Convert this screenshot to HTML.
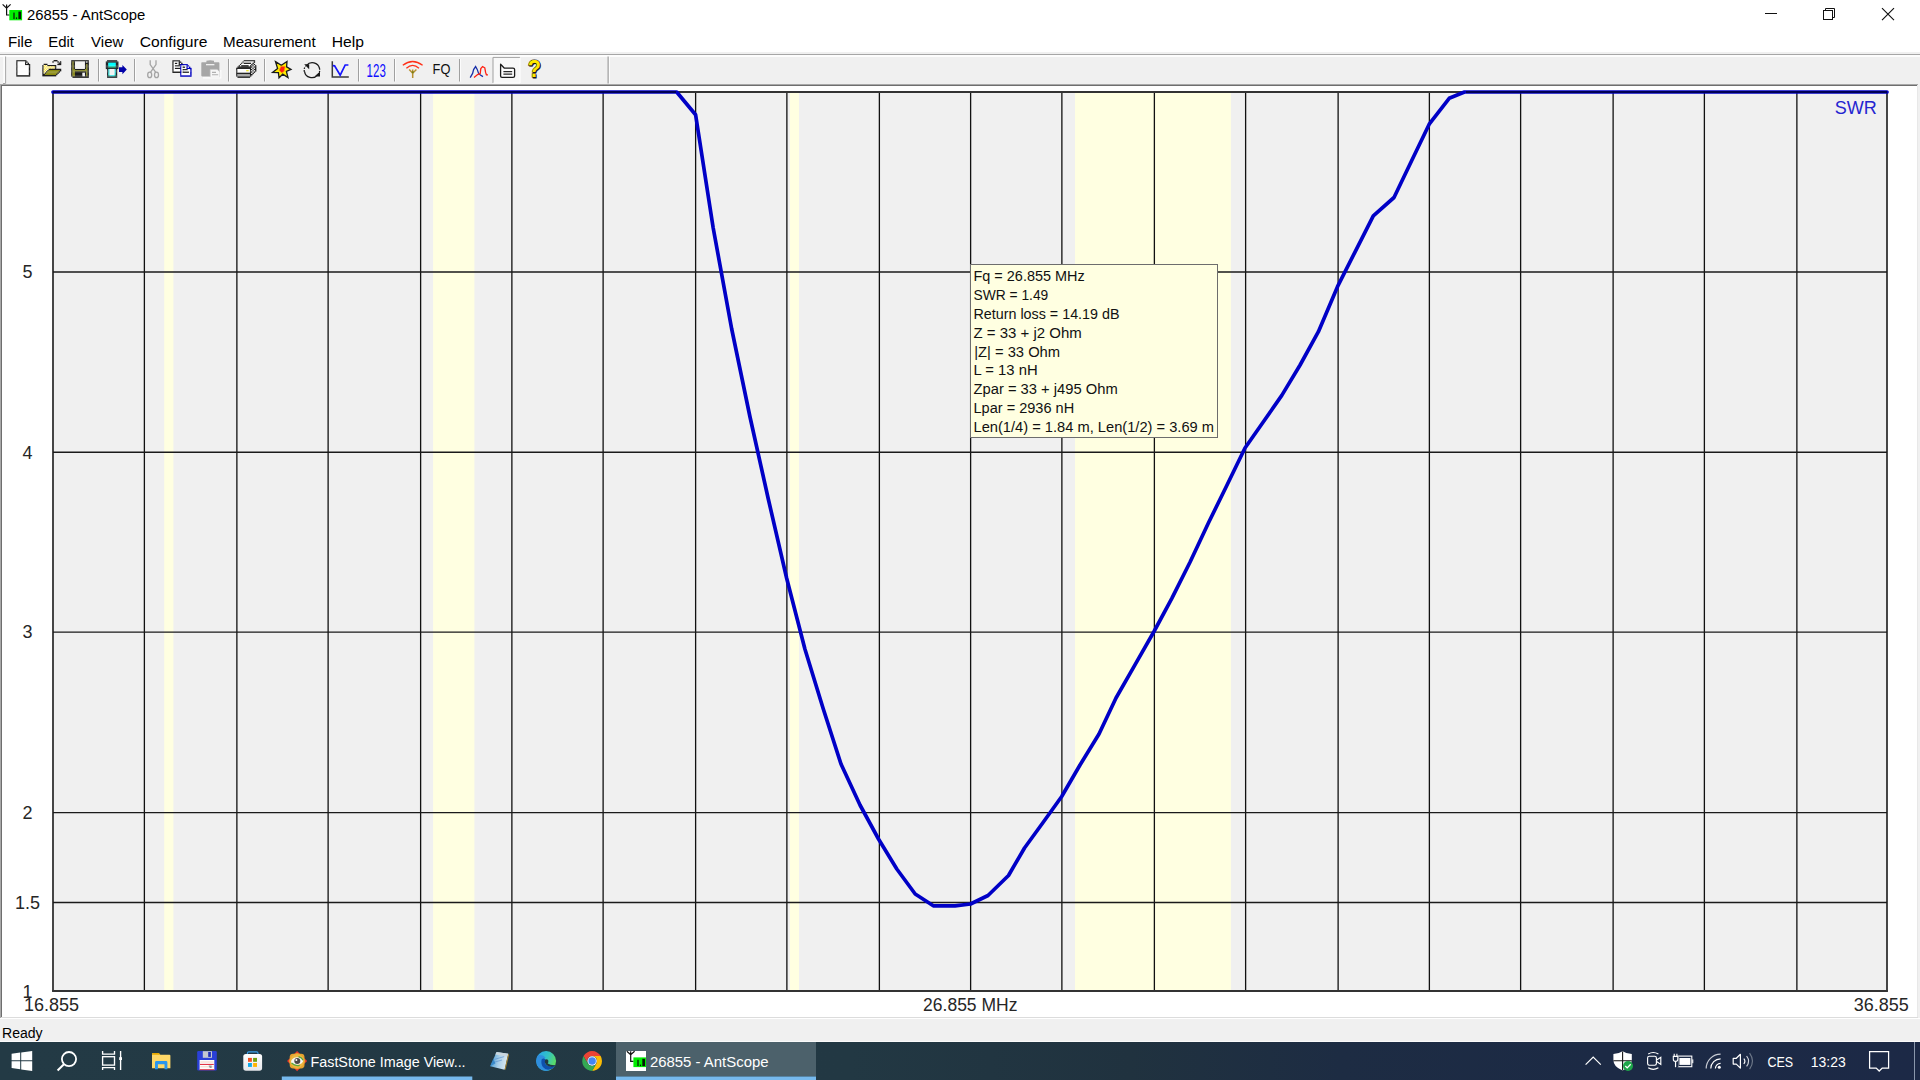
<!DOCTYPE html>
<html><head><meta charset="utf-8"><title>26855 - AntScope</title>
<style>
html,body{margin:0;padding:0;}
body{width:1920px;height:1080px;position:relative;overflow:hidden;background:#fff;font-family:"Liberation Sans",sans-serif;color:#000;}
.a{position:absolute;}
.t{position:absolute;white-space:pre;transform-origin:0 0;line-height:1;}
</style></head><body>
<div class="a" style="left:0;top:0;width:1920px;height:52px;background:#fff"></div>
<div class="a" style="left:0;top:52px;width:1920px;height:32px;background:#f0f0f0"></div>
<div class="a" style="left:0;top:54px;width:1920px;height:1px;background:#a6a6a6"></div>
<div class="a" style="left:0;top:55px;width:1920px;height:2px;background:#fdfdfd"></div>
<div class="a" style="left:0;top:84px;width:1918px;height:934px;background:#fff"></div>
<div class="a" style="left:0;top:84px;width:1918px;height:1px;background:#a8a8a8"></div>
<div class="a" style="left:0;top:85px;width:1918px;height:1px;background:#6e6e6e"></div>
<div class="a" style="left:0;top:84px;width:1px;height:934px;background:#a8a8a8"></div>
<div class="a" style="left:1px;top:85px;width:1px;height:932px;background:#6e6e6e"></div>
<div class="a" style="left:1918px;top:84px;width:2px;height:935px;background:#f0f0f0"></div>
<div class="a" style="left:1917px;top:85px;width:1px;height:933px;background:#e8e8e8"></div>
<div class="a" style="left:1px;top:1017px;width:1917px;height:1px;background:#dcdcdc"></div>
<div class="a" style="left:0;top:1018px;width:1920px;height:1px;background:#fff"></div>
<div class="a" style="left:0;top:1019px;width:1920px;height:23px;background:#f0f0f0"></div>
<div class="a" style="left:0;top:1041px;width:1920px;height:1px;background:#fafafa"></div>
<svg width="1920" height="1080" viewBox="0 0 1920 1080" style="position:absolute;left:0;top:0">
<rect x="53.0" y="92.0" width="1834.0" height="899.0" fill="#f0f0f0"/>
<rect x="164.2" y="92.0" width="9.2" height="899.0" fill="#ffffe1"/>
<rect x="433.1" y="92.0" width="41.3" height="899.0" fill="#ffffe1"/>
<rect x="789.8" y="92.0" width="9.2" height="899.0" fill="#ffffe1"/>
<rect x="1075.0" y="92.0" width="155.9" height="899.0" fill="#ffffe1"/>
<path d="M144.38 91.4V991.6M236.88 91.4V991.6M328.12 91.4V991.6M420.62 91.4V991.6M511.88 91.4V991.6M603.12 91.4V991.6M695.62 91.4V991.6M786.88 91.4V991.6M879.38 91.4V991.6M970.62 91.4V991.6M1061.88 91.4V991.6M1154.38 91.4V991.6M1245.62 91.4V991.6M1338.12 91.4V991.6M1429.38 91.4V991.6M1520.62 91.4V991.6M1613.12 91.4V991.6M1704.38 91.4V991.6M1796.88 91.4V991.6" stroke="#111" stroke-width="1.3" fill="none"/>
<path d="M53.00 91.4V991.6M1887.00 91.4V991.6" stroke="#333" stroke-width="1.8" fill="none"/>
<path d="M53.0 272.07H1887.0M53.0 452.32H1887.0M53.0 632.08H1887.0M53.0 812.58H1887.0M53.0 902.45H1887.0" stroke="#1a1a1a" stroke-width="1.4" fill="none"/>
<path d="M52.1 92H1887.9M52.1 991H1887.9" stroke="#333" stroke-width="1.8" fill="none"/>
<path d="M53.0 92.0 L676.7 92.0 L695.6 114.8 L713.2 228.0 L731.6 328.5 L749.9 416.5 L768.3 499.0 L786.6 578.0 L804.9 649.0 L823.3 709.0 L841.0 764.0 L860.0 805.0 L878.5 839.0 L896.8 869.0 L915.2 894.0 L933.3 905.8 L955.0 905.8 L970.5 904.0 L988.0 895.5 L1008.5 875.5 L1024.5 848.0 L1043.4 822.0 L1061.7 796.5 L1080.0 765.0 L1099.0 734.0 L1116.0 698.0 L1135.1 664.7 L1154.0 631.5 L1171.7 598.6 L1190.1 562.0 L1208.4 523.0 L1226.8 485.5 L1245.0 448.0 L1263.4 421.7 L1281.8 395.4 L1300.1 365.0 L1318.4 331.7 L1337.5 286.7 L1355.1 251.8 L1373.3 215.8 L1394.0 197.5 L1411.5 161.0 L1429.2 124.2 L1449.2 98.3 L1464.5 92.0 L1887.0 92.0" stroke="#0000c6" stroke-width="3.7" fill="none" stroke-linejoin="round" stroke-linecap="round"/>
<path d="M53 92H676M1466 92H1887" stroke="#000018" stroke-width="1.3" opacity="0.85" fill="none"/>
</svg>
<div class="a" style="left:970px;top:264px;width:246px;height:172px;background:#ffffe1;border:1px solid #6d6d6d"></div>
<svg width="1920" height="1080" viewBox="0 0 1920 1080" style="position:absolute;left:0;top:0" font-family="Liberation Sans, sans-serif">
<text x="27.00" y="19.60" font-size="14.7" fill="#000" textLength="118.20" lengthAdjust="spacingAndGlyphs" xml:space="preserve">26855 - AntScope</text>
<text x="8.00" y="46.60" font-size="14.7" fill="#000" textLength="24.40" lengthAdjust="spacingAndGlyphs" xml:space="preserve">File</text>
<text x="48.30" y="46.60" font-size="14.7" fill="#000" textLength="25.70" lengthAdjust="spacingAndGlyphs" xml:space="preserve">Edit</text>
<text x="91.10" y="46.60" font-size="14.7" fill="#000" textLength="32.30" lengthAdjust="spacingAndGlyphs" xml:space="preserve">View</text>
<text x="139.70" y="46.60" font-size="14.7" fill="#000" textLength="67.70" lengthAdjust="spacingAndGlyphs" xml:space="preserve">Configure</text>
<text x="223.00" y="46.60" font-size="14.7" fill="#000" textLength="92.70" lengthAdjust="spacingAndGlyphs" xml:space="preserve">Measurement</text>
<text x="331.70" y="46.60" font-size="14.7" fill="#000" textLength="32.30" lengthAdjust="spacingAndGlyphs" xml:space="preserve">Help</text>
<text x="2.00" y="1037.80" font-size="14.7" fill="#000" textLength="40.60" lengthAdjust="spacingAndGlyphs" xml:space="preserve">Ready</text>
<text x="27.40" y="278.30" font-size="18" fill="#262626" text-anchor="middle" xml:space="preserve">5</text>
<text x="27.40" y="458.50" font-size="18" fill="#262626" text-anchor="middle" xml:space="preserve">4</text>
<text x="27.40" y="638.30" font-size="18" fill="#262626" text-anchor="middle" xml:space="preserve">3</text>
<text x="27.40" y="818.60" font-size="18" fill="#262626" text-anchor="middle" xml:space="preserve">2</text>
<text x="27.40" y="908.60" font-size="18" fill="#262626" text-anchor="middle" xml:space="preserve">1.5</text>
<text x="27.40" y="997.60" font-size="18" fill="#262626" text-anchor="middle" xml:space="preserve">1</text>
<text x="24.00" y="1010.80" font-size="18" fill="#262626" xml:space="preserve">16.855</text>
<text x="923.10" y="1010.80" font-size="18" fill="#262626" textLength="94.30" lengthAdjust="spacingAndGlyphs" xml:space="preserve">26.855 MHz</text>
<text x="1908.80" y="1010.80" font-size="18" fill="#262626" text-anchor="end" xml:space="preserve">36.855</text>
<text x="1834.80" y="114.30" font-size="18" fill="#2424d0" xml:space="preserve">SWR</text>
<text x="973.50" y="281.40" font-size="14.7" fill="#111" textLength="111.20" lengthAdjust="spacingAndGlyphs" xml:space="preserve">Fq = 26.855 MHz</text>
<text x="973.50" y="300.18" font-size="14.7" fill="#111" textLength="74.80" lengthAdjust="spacingAndGlyphs" xml:space="preserve">SWR = 1.49</text>
<text x="973.50" y="318.96" font-size="14.7" fill="#111" textLength="146.00" lengthAdjust="spacingAndGlyphs" xml:space="preserve">Return loss = 14.19 dB</text>
<text x="973.50" y="337.74" font-size="14.7" fill="#111" textLength="108.20" lengthAdjust="spacingAndGlyphs" xml:space="preserve">Z = 33 + j2 Ohm</text>
<text x="974.20" y="356.52" font-size="14.7" fill="#111" textLength="85.90" lengthAdjust="spacingAndGlyphs" xml:space="preserve">|Z| = 33 Ohm</text>
<text x="973.50" y="375.30" font-size="14.7" fill="#111" textLength="64.10" lengthAdjust="spacingAndGlyphs" xml:space="preserve">L = 13 nH</text>
<text x="973.50" y="394.08" font-size="14.7" fill="#111" textLength="144.20" lengthAdjust="spacingAndGlyphs" xml:space="preserve">Zpar = 33 + j495 Ohm</text>
<text x="973.50" y="412.86" font-size="14.7" fill="#111" textLength="100.70" lengthAdjust="spacingAndGlyphs" xml:space="preserve">Lpar = 2936 nH</text>
<text x="973.50" y="431.64" font-size="14.7" fill="#111" textLength="240.50" lengthAdjust="spacingAndGlyphs" xml:space="preserve">Len(1/4) = 1.84 m, Len(1/2) = 3.69 m</text>
</svg>
<svg width="1920" height="90" viewBox="0 0 1920 90" style="position:absolute;left:0;top:0"><path d="M2.6 4.4L6.6 8.2L10.6 4.4M6.6 4.4V15H9.6" fill="none" stroke="#111" stroke-width="1.2"/><rect x="9.3" y="10" width="12.8" height="10.3" fill="#00f000"/><rect x="13.4" y="12.6" width="1.2" height="6.4" fill="#061806"/><rect x="15.9" y="17.4" width="1.2" height="1.6" fill="#061806"/><rect x="18.4" y="11.6" width="2.7" height="7.4" fill="#061806"/><path d="M1765 13.5H1777" stroke="#111" stroke-width="1"/><path d="M1825.5 10.5V8.5H1834.5V17.5H1832.5" fill="none" stroke="#111" stroke-width="1"/><rect x="1823.5" y="10.5" width="9" height="9" fill="none" stroke="#111" stroke-width="1"/><path d="M1882 8.2L1894 20.2M1894 8.2L1882 20.2" stroke="#111" stroke-width="1.15"/><rect x="16.30" y="60.20" width="10.15" height="1.40" fill="#1c1c1c"/><rect x="16.30" y="61.45" width="1.40" height="1.40" fill="#1c1c1c"/><rect x="17.55" y="61.45" width="7.65" height="1.40" fill="#fff"/><rect x="25.05" y="61.45" width="2.65" height="1.40" fill="#1c1c1c"/><rect x="16.30" y="62.70" width="1.40" height="1.40" fill="#1c1c1c"/><rect x="17.55" y="62.70" width="7.65" height="1.40" fill="#fff"/><rect x="25.05" y="62.70" width="1.40" height="1.40" fill="#1c1c1c"/><rect x="26.30" y="62.70" width="1.40" height="1.40" fill="#fff"/><rect x="27.55" y="62.70" width="1.40" height="1.40" fill="#1c1c1c"/><rect x="16.30" y="63.95" width="1.40" height="1.40" fill="#1c1c1c"/><rect x="17.55" y="63.95" width="7.65" height="1.40" fill="#fff"/><rect x="25.05" y="63.95" width="5.15" height="1.40" fill="#1c1c1c"/><rect x="16.30" y="65.20" width="1.40" height="1.40" fill="#1c1c1c"/><rect x="17.55" y="65.20" width="11.40" height="1.40" fill="#fff"/><rect x="28.80" y="65.20" width="1.40" height="1.40" fill="#1c1c1c"/><rect x="16.30" y="66.45" width="1.40" height="1.40" fill="#1c1c1c"/><rect x="17.55" y="66.45" width="11.40" height="1.40" fill="#fff"/><rect x="28.80" y="66.45" width="1.40" height="1.40" fill="#1c1c1c"/><rect x="16.30" y="67.70" width="1.40" height="1.40" fill="#1c1c1c"/><rect x="17.55" y="67.70" width="11.40" height="1.40" fill="#fff"/><rect x="28.80" y="67.70" width="1.40" height="1.40" fill="#1c1c1c"/><rect x="16.30" y="68.95" width="1.40" height="1.40" fill="#1c1c1c"/><rect x="17.55" y="68.95" width="11.40" height="1.40" fill="#fff"/><rect x="28.80" y="68.95" width="1.40" height="1.40" fill="#1c1c1c"/><rect x="16.30" y="70.20" width="1.40" height="1.40" fill="#1c1c1c"/><rect x="17.55" y="70.20" width="11.40" height="1.40" fill="#fff"/><rect x="28.80" y="70.20" width="1.40" height="1.40" fill="#1c1c1c"/><rect x="16.30" y="71.45" width="1.40" height="1.40" fill="#1c1c1c"/><rect x="17.55" y="71.45" width="11.40" height="1.40" fill="#fff"/><rect x="28.80" y="71.45" width="1.40" height="1.40" fill="#1c1c1c"/><rect x="16.30" y="72.70" width="1.40" height="1.40" fill="#1c1c1c"/><rect x="17.55" y="72.70" width="11.40" height="1.40" fill="#fff"/><rect x="28.80" y="72.70" width="1.40" height="1.40" fill="#1c1c1c"/><rect x="16.30" y="73.95" width="1.40" height="1.40" fill="#1c1c1c"/><rect x="17.55" y="73.95" width="11.40" height="1.40" fill="#fff"/><rect x="28.80" y="73.95" width="1.40" height="1.40" fill="#1c1c1c"/><rect x="16.30" y="75.20" width="13.90" height="1.40" fill="#1c1c1c"/><rect x="53.60" y="60.00" width="3.90" height="1.40" fill="#1c1c1c"/><rect x="52.35" y="61.25" width="1.40" height="1.40" fill="#1c1c1c"/><rect x="57.35" y="61.25" width="1.40" height="1.40" fill="#1c1c1c"/><rect x="59.85" y="61.25" width="1.40" height="1.40" fill="#1c1c1c"/><rect x="58.60" y="62.50" width="2.65" height="1.40" fill="#1c1c1c"/><rect x="43.60" y="63.75" width="3.90" height="1.40" fill="#1c1c1c"/><rect x="57.35" y="63.75" width="3.90" height="1.40" fill="#1c1c1c"/><rect x="42.35" y="65.00" width="1.40" height="1.40" fill="#1c1c1c"/><rect x="43.60" y="65.00" width="1.40" height="1.40" fill="#fff8c8"/><rect x="44.85" y="65.00" width="1.40" height="1.40" fill="#ffe640"/><rect x="46.10" y="65.00" width="1.40" height="1.40" fill="#fff8c8"/><rect x="47.35" y="65.00" width="8.90" height="1.40" fill="#1c1c1c"/><rect x="42.35" y="66.25" width="1.40" height="1.40" fill="#1c1c1c"/><rect x="43.60" y="66.25" width="1.40" height="1.40" fill="#ffe640"/><rect x="44.85" y="66.25" width="1.40" height="1.40" fill="#fff8c8"/><rect x="46.10" y="66.25" width="1.40" height="1.40" fill="#ffe640"/><rect x="47.35" y="66.25" width="1.40" height="1.40" fill="#fff8c8"/><rect x="48.60" y="66.25" width="1.40" height="1.40" fill="#ffe640"/><rect x="49.85" y="66.25" width="1.40" height="1.40" fill="#fff8c8"/><rect x="51.10" y="66.25" width="1.40" height="1.40" fill="#ffe640"/><rect x="52.35" y="66.25" width="1.40" height="1.40" fill="#fff8c8"/><rect x="53.60" y="66.25" width="1.40" height="1.40" fill="#ffe640"/><rect x="54.85" y="66.25" width="1.40" height="1.40" fill="#1c1c1c"/><rect x="42.35" y="67.50" width="1.40" height="1.40" fill="#1c1c1c"/><rect x="43.60" y="67.50" width="1.40" height="1.40" fill="#fff8c8"/><rect x="44.85" y="67.50" width="1.40" height="1.40" fill="#ffe640"/><rect x="46.10" y="67.50" width="1.40" height="1.40" fill="#fff8c8"/><rect x="47.35" y="67.50" width="1.40" height="1.40" fill="#ffe640"/><rect x="48.60" y="67.50" width="1.40" height="1.40" fill="#fff8c8"/><rect x="49.85" y="67.50" width="1.40" height="1.40" fill="#ffe640"/><rect x="51.10" y="67.50" width="1.40" height="1.40" fill="#fff8c8"/><rect x="52.35" y="67.50" width="1.40" height="1.40" fill="#ffe640"/><rect x="53.60" y="67.50" width="1.40" height="1.40" fill="#fff8c8"/><rect x="54.85" y="67.50" width="1.40" height="1.40" fill="#1c1c1c"/><rect x="42.35" y="68.75" width="1.40" height="1.40" fill="#1c1c1c"/><rect x="43.60" y="68.75" width="1.40" height="1.40" fill="#ffe640"/><rect x="44.85" y="68.75" width="1.40" height="1.40" fill="#fff8c8"/><rect x="46.10" y="68.75" width="1.40" height="1.40" fill="#ffe640"/><rect x="47.35" y="68.75" width="1.40" height="1.40" fill="#fff8c8"/><rect x="48.60" y="68.75" width="12.65" height="1.40" fill="#1c1c1c"/><rect x="42.35" y="70.00" width="1.40" height="1.40" fill="#1c1c1c"/><rect x="43.60" y="70.00" width="1.40" height="1.40" fill="#fff8c8"/><rect x="44.85" y="70.00" width="1.40" height="1.40" fill="#ffe640"/><rect x="46.10" y="70.00" width="1.40" height="1.40" fill="#fff8c8"/><rect x="47.35" y="70.00" width="1.40" height="1.40" fill="#1c1c1c"/><rect x="48.60" y="70.00" width="11.40" height="1.40" fill="#8a8a10"/><rect x="59.85" y="70.00" width="1.40" height="1.40" fill="#1c1c1c"/><rect x="42.35" y="71.25" width="1.40" height="1.40" fill="#1c1c1c"/><rect x="43.60" y="71.25" width="1.40" height="1.40" fill="#ffe640"/><rect x="44.85" y="71.25" width="1.40" height="1.40" fill="#fff8c8"/><rect x="46.10" y="71.25" width="1.40" height="1.40" fill="#1c1c1c"/><rect x="47.35" y="71.25" width="11.40" height="1.40" fill="#8a8a10"/><rect x="58.60" y="71.25" width="1.40" height="1.40" fill="#1c1c1c"/><rect x="42.35" y="72.50" width="1.40" height="1.40" fill="#1c1c1c"/><rect x="43.60" y="72.50" width="1.40" height="1.40" fill="#fff8c8"/><rect x="44.85" y="72.50" width="1.40" height="1.40" fill="#1c1c1c"/><rect x="46.10" y="72.50" width="11.40" height="1.40" fill="#8a8a10"/><rect x="57.35" y="72.50" width="1.40" height="1.40" fill="#1c1c1c"/><rect x="42.35" y="73.75" width="2.65" height="1.40" fill="#1c1c1c"/><rect x="44.85" y="73.75" width="11.40" height="1.40" fill="#8a8a10"/><rect x="56.10" y="73.75" width="1.40" height="1.40" fill="#1c1c1c"/><rect x="42.35" y="75.00" width="13.90" height="1.40" fill="#1c1c1c"/><rect x="71.20" y="60.20" width="17.65" height="1.40" fill="#1c1c1c"/><rect x="71.20" y="61.45" width="1.40" height="1.40" fill="#1c1c1c"/><rect x="72.45" y="61.45" width="1.40" height="1.40" fill="#8c8c20"/><rect x="73.70" y="61.45" width="1.40" height="1.40" fill="#1c1c1c"/><rect x="74.95" y="61.45" width="10.15" height="1.40" fill="#f4f4f4"/><rect x="84.95" y="61.45" width="1.40" height="1.40" fill="#1c1c1c"/><rect x="86.20" y="61.45" width="1.40" height="1.40" fill="#f4f4f4"/><rect x="87.45" y="61.45" width="1.40" height="1.40" fill="#1c1c1c"/><rect x="71.20" y="62.70" width="1.40" height="1.40" fill="#1c1c1c"/><rect x="72.45" y="62.70" width="1.40" height="1.40" fill="#8c8c20"/><rect x="73.70" y="62.70" width="1.40" height="1.40" fill="#1c1c1c"/><rect x="74.95" y="62.70" width="10.15" height="1.40" fill="#f4f4f4"/><rect x="84.95" y="62.70" width="3.90" height="1.40" fill="#1c1c1c"/><rect x="71.20" y="63.95" width="1.40" height="1.40" fill="#1c1c1c"/><rect x="72.45" y="63.95" width="1.40" height="1.40" fill="#8c8c20"/><rect x="73.70" y="63.95" width="1.40" height="1.40" fill="#1c1c1c"/><rect x="74.95" y="63.95" width="10.15" height="1.40" fill="#f4f4f4"/><rect x="84.95" y="63.95" width="1.40" height="1.40" fill="#1c1c1c"/><rect x="86.20" y="63.95" width="1.40" height="1.40" fill="#8c8c20"/><rect x="87.45" y="63.95" width="1.40" height="1.40" fill="#1c1c1c"/><rect x="71.20" y="65.20" width="1.40" height="1.40" fill="#1c1c1c"/><rect x="72.45" y="65.20" width="1.40" height="1.40" fill="#8c8c20"/><rect x="73.70" y="65.20" width="1.40" height="1.40" fill="#1c1c1c"/><rect x="74.95" y="65.20" width="10.15" height="1.40" fill="#f4f4f4"/><rect x="84.95" y="65.20" width="1.40" height="1.40" fill="#1c1c1c"/><rect x="86.20" y="65.20" width="1.40" height="1.40" fill="#8c8c20"/><rect x="87.45" y="65.20" width="1.40" height="1.40" fill="#1c1c1c"/><rect x="71.20" y="66.45" width="1.40" height="1.40" fill="#1c1c1c"/><rect x="72.45" y="66.45" width="1.40" height="1.40" fill="#8c8c20"/><rect x="73.70" y="66.45" width="1.40" height="1.40" fill="#1c1c1c"/><rect x="74.95" y="66.45" width="10.15" height="1.40" fill="#f4f4f4"/><rect x="84.95" y="66.45" width="1.40" height="1.40" fill="#1c1c1c"/><rect x="86.20" y="66.45" width="1.40" height="1.40" fill="#8c8c20"/><rect x="87.45" y="66.45" width="1.40" height="1.40" fill="#1c1c1c"/><rect x="71.20" y="67.70" width="1.40" height="1.40" fill="#1c1c1c"/><rect x="72.45" y="67.70" width="1.40" height="1.40" fill="#8c8c20"/><rect x="73.70" y="67.70" width="1.40" height="1.40" fill="#1c1c1c"/><rect x="74.95" y="67.70" width="10.15" height="1.40" fill="#f4f4f4"/><rect x="84.95" y="67.70" width="1.40" height="1.40" fill="#1c1c1c"/><rect x="86.20" y="67.70" width="1.40" height="1.40" fill="#8c8c20"/><rect x="87.45" y="67.70" width="1.40" height="1.40" fill="#1c1c1c"/><rect x="71.20" y="68.95" width="1.40" height="1.40" fill="#1c1c1c"/><rect x="72.45" y="68.95" width="2.65" height="1.40" fill="#8c8c20"/><rect x="74.95" y="68.95" width="10.15" height="1.40" fill="#1c1c1c"/><rect x="84.95" y="68.95" width="2.65" height="1.40" fill="#8c8c20"/><rect x="87.45" y="68.95" width="1.40" height="1.40" fill="#1c1c1c"/><rect x="71.20" y="70.20" width="1.40" height="1.40" fill="#1c1c1c"/><rect x="72.45" y="70.20" width="15.15" height="1.40" fill="#8c8c20"/><rect x="87.45" y="70.20" width="1.40" height="1.40" fill="#1c1c1c"/><rect x="71.20" y="71.45" width="1.40" height="1.40" fill="#1c1c1c"/><rect x="72.45" y="71.45" width="2.65" height="1.40" fill="#8c8c20"/><rect x="74.95" y="71.45" width="11.40" height="1.40" fill="#1c1c1c"/><rect x="86.20" y="71.45" width="1.40" height="1.40" fill="#8c8c20"/><rect x="87.45" y="71.45" width="1.40" height="1.40" fill="#1c1c1c"/><rect x="71.20" y="72.70" width="1.40" height="1.40" fill="#1c1c1c"/><rect x="72.45" y="72.70" width="2.65" height="1.40" fill="#8c8c20"/><rect x="74.95" y="72.70" width="7.65" height="1.40" fill="#1c1c1c"/><rect x="82.45" y="72.70" width="2.65" height="1.40" fill="#f4f4f4"/><rect x="84.95" y="72.70" width="1.40" height="1.40" fill="#1c1c1c"/><rect x="86.20" y="72.70" width="1.40" height="1.40" fill="#8c8c20"/><rect x="87.45" y="72.70" width="1.40" height="1.40" fill="#1c1c1c"/><rect x="71.20" y="73.95" width="1.40" height="1.40" fill="#1c1c1c"/><rect x="72.45" y="73.95" width="2.65" height="1.40" fill="#8c8c20"/><rect x="74.95" y="73.95" width="7.65" height="1.40" fill="#1c1c1c"/><rect x="82.45" y="73.95" width="2.65" height="1.40" fill="#f4f4f4"/><rect x="84.95" y="73.95" width="1.40" height="1.40" fill="#1c1c1c"/><rect x="86.20" y="73.95" width="1.40" height="1.40" fill="#8c8c20"/><rect x="87.45" y="73.95" width="1.40" height="1.40" fill="#1c1c1c"/><rect x="71.20" y="75.20" width="1.40" height="1.40" fill="#1c1c1c"/><rect x="72.45" y="75.20" width="2.65" height="1.40" fill="#8c8c20"/><rect x="74.95" y="75.20" width="7.65" height="1.40" fill="#1c1c1c"/><rect x="82.45" y="75.20" width="2.65" height="1.40" fill="#f4f4f4"/><rect x="84.95" y="75.20" width="1.40" height="1.40" fill="#1c1c1c"/><rect x="86.20" y="75.20" width="1.40" height="1.40" fill="#8c8c20"/><rect x="87.45" y="75.20" width="1.40" height="1.40" fill="#1c1c1c"/><rect x="72.45" y="76.45" width="16.40" height="1.40" fill="#1c1c1c"/><rect x="107.05" y="60.20" width="10.15" height="1.40" fill="#20282c"/><rect x="105.80" y="61.45" width="12.65" height="1.40" fill="#20282c"/><rect x="105.80" y="62.70" width="2.65" height="1.40" fill="#20282c"/><rect x="108.30" y="62.70" width="7.65" height="1.40" fill="#00ffff"/><rect x="115.80" y="62.70" width="2.65" height="1.40" fill="#20282c"/><rect x="105.80" y="63.95" width="2.65" height="1.40" fill="#20282c"/><rect x="108.30" y="63.95" width="7.65" height="1.40" fill="#00ffff"/><rect x="115.80" y="63.95" width="2.65" height="1.40" fill="#20282c"/><rect x="105.80" y="65.20" width="2.65" height="1.40" fill="#20282c"/><rect x="108.30" y="65.20" width="7.65" height="1.40" fill="#00ffff"/><rect x="115.80" y="65.20" width="2.65" height="1.40" fill="#20282c"/><rect x="105.80" y="66.45" width="2.65" height="1.40" fill="#20282c"/><rect x="108.30" y="66.45" width="7.65" height="1.40" fill="#18a070"/><rect x="115.80" y="66.45" width="2.65" height="1.40" fill="#20282c"/><rect x="105.80" y="67.70" width="12.65" height="1.40" fill="#20282c"/><rect x="107.05" y="68.95" width="1.40" height="1.40" fill="#20282c"/><rect x="108.30" y="68.95" width="1.40" height="1.40" fill="#30e0e0"/><rect x="109.55" y="68.95" width="5.15" height="1.40" fill="#f4f4f4"/><rect x="114.55" y="68.95" width="1.40" height="1.40" fill="#30e0e0"/><rect x="115.80" y="68.95" width="1.40" height="1.40" fill="#20282c"/><rect x="107.05" y="70.20" width="1.40" height="1.40" fill="#20282c"/><rect x="108.30" y="70.20" width="1.40" height="1.40" fill="#30e0e0"/><rect x="109.55" y="70.20" width="5.15" height="1.40" fill="#f4f4f4"/><rect x="114.55" y="70.20" width="1.40" height="1.40" fill="#30e0e0"/><rect x="115.80" y="70.20" width="1.40" height="1.40" fill="#20282c"/><rect x="107.05" y="71.45" width="1.40" height="1.40" fill="#20282c"/><rect x="108.30" y="71.45" width="1.40" height="1.40" fill="#30e0e0"/><rect x="109.55" y="71.45" width="5.15" height="1.40" fill="#f4f4f4"/><rect x="114.55" y="71.45" width="1.40" height="1.40" fill="#30e0e0"/><rect x="115.80" y="71.45" width="1.40" height="1.40" fill="#20282c"/><rect x="107.05" y="72.70" width="1.40" height="1.40" fill="#20282c"/><rect x="108.30" y="72.70" width="1.40" height="1.40" fill="#30e0e0"/><rect x="109.55" y="72.70" width="5.15" height="1.40" fill="#f4f4f4"/><rect x="114.55" y="72.70" width="1.40" height="1.40" fill="#30e0e0"/><rect x="115.80" y="72.70" width="1.40" height="1.40" fill="#20282c"/><rect x="107.05" y="73.95" width="1.40" height="1.40" fill="#20282c"/><rect x="108.30" y="73.95" width="1.40" height="1.40" fill="#30e0e0"/><rect x="109.55" y="73.95" width="5.15" height="1.40" fill="#f4f4f4"/><rect x="114.55" y="73.95" width="1.40" height="1.40" fill="#30e0e0"/><rect x="115.80" y="73.95" width="1.40" height="1.40" fill="#20282c"/><rect x="107.05" y="75.20" width="1.40" height="1.40" fill="#20282c"/><rect x="108.30" y="75.20" width="1.40" height="1.40" fill="#18a070"/><rect x="109.55" y="75.20" width="5.15" height="1.40" fill="#30e0e0"/><rect x="114.55" y="75.20" width="1.40" height="1.40" fill="#18a070"/><rect x="115.80" y="75.20" width="1.40" height="1.40" fill="#20282c"/><rect x="107.05" y="76.45" width="10.15" height="1.40" fill="#20282c"/><path d="M119 67.3H122.4V65L126.8 69.6L122.4 74.2V71.9H119Z" fill="#0000a8"/><g fill="none" stroke="#a4a4a4" stroke-width="1.3"><path d="M150.2 60.3V64.5L155.6 72.2M156.0 60.3V64.5L150.6 72.2"/><ellipse cx="149.7" cy="74.9" rx="2.0" ry="2.7"/><ellipse cx="156.5" cy="74.9" rx="2.0" ry="2.7"/></g><rect x="172.40" y="60.30" width="7.65" height="1.40" fill="#1c1c1c"/><rect x="172.40" y="61.55" width="1.40" height="1.40" fill="#1c1c1c"/><rect x="173.65" y="61.55" width="5.15" height="1.40" fill="#fff"/><rect x="178.65" y="61.55" width="2.65" height="1.40" fill="#1c1c1c"/><rect x="172.40" y="62.80" width="1.40" height="1.40" fill="#1c1c1c"/><rect x="173.65" y="62.80" width="1.40" height="1.40" fill="#fff"/><rect x="174.90" y="62.80" width="2.65" height="1.40" fill="#1c1c1c"/><rect x="177.40" y="62.80" width="1.40" height="1.40" fill="#fff"/><rect x="178.65" y="62.80" width="1.40" height="1.40" fill="#1c1c1c"/><rect x="179.90" y="62.80" width="1.40" height="1.40" fill="#fff"/><rect x="181.15" y="62.80" width="1.40" height="1.40" fill="#1c1c1c"/><rect x="172.40" y="64.05" width="1.40" height="1.40" fill="#1c1c1c"/><rect x="173.65" y="64.05" width="5.15" height="1.40" fill="#fff"/><rect x="178.65" y="64.05" width="5.15" height="1.40" fill="#1c1c1c"/><rect x="172.40" y="65.30" width="1.40" height="1.40" fill="#1c1c1c"/><rect x="173.65" y="65.30" width="1.40" height="1.40" fill="#fff"/><rect x="174.90" y="65.30" width="5.15" height="1.40" fill="#1c1c1c"/><rect x="179.90" y="65.30" width="2.65" height="1.40" fill="#fff"/><rect x="182.40" y="65.30" width="1.40" height="1.40" fill="#1c1c1c"/><rect x="172.40" y="66.55" width="1.40" height="1.40" fill="#1c1c1c"/><rect x="173.65" y="66.55" width="8.90" height="1.40" fill="#fff"/><rect x="182.40" y="66.55" width="1.40" height="1.40" fill="#1c1c1c"/><rect x="172.40" y="67.80" width="1.40" height="1.40" fill="#1c1c1c"/><rect x="173.65" y="67.80" width="1.40" height="1.40" fill="#fff"/><rect x="174.90" y="67.80" width="6.40" height="1.40" fill="#1c1c1c"/><rect x="181.15" y="67.80" width="1.40" height="1.40" fill="#fff"/><rect x="182.40" y="67.80" width="1.40" height="1.40" fill="#1c1c1c"/><rect x="172.40" y="69.05" width="1.40" height="1.40" fill="#1c1c1c"/><rect x="173.65" y="69.05" width="8.90" height="1.40" fill="#fff"/><rect x="182.40" y="69.05" width="1.40" height="1.40" fill="#1c1c1c"/><rect x="172.40" y="70.30" width="1.40" height="1.40" fill="#1c1c1c"/><rect x="173.65" y="70.30" width="8.90" height="1.40" fill="#fff"/><rect x="182.40" y="70.30" width="1.40" height="1.40" fill="#1c1c1c"/><rect x="172.40" y="71.55" width="11.40" height="1.40" fill="#1c1c1c"/><rect x="180.20" y="64.10" width="7.65" height="1.40" fill="#0000c0"/><rect x="180.20" y="65.35" width="1.40" height="1.40" fill="#0000c0"/><rect x="181.45" y="65.35" width="5.15" height="1.40" fill="#fff"/><rect x="186.45" y="65.35" width="2.65" height="1.40" fill="#0000c0"/><rect x="180.20" y="66.60" width="1.40" height="1.40" fill="#0000c0"/><rect x="181.45" y="66.60" width="1.40" height="1.40" fill="#fff"/><rect x="182.70" y="66.60" width="2.65" height="1.40" fill="#1c1c1c"/><rect x="185.20" y="66.60" width="1.40" height="1.40" fill="#fff"/><rect x="186.45" y="66.60" width="1.40" height="1.40" fill="#0000c0"/><rect x="187.70" y="66.60" width="1.40" height="1.40" fill="#fff"/><rect x="188.95" y="66.60" width="1.40" height="1.40" fill="#0000c0"/><rect x="180.20" y="67.85" width="1.40" height="1.40" fill="#0000c0"/><rect x="181.45" y="67.85" width="5.15" height="1.40" fill="#fff"/><rect x="186.45" y="67.85" width="5.15" height="1.40" fill="#0000c0"/><rect x="180.20" y="69.10" width="1.40" height="1.40" fill="#0000c0"/><rect x="181.45" y="69.10" width="1.40" height="1.40" fill="#fff"/><rect x="182.70" y="69.10" width="5.15" height="1.40" fill="#1c1c1c"/><rect x="187.70" y="69.10" width="2.65" height="1.40" fill="#fff"/><rect x="190.20" y="69.10" width="1.40" height="1.40" fill="#0000c0"/><rect x="180.20" y="70.35" width="1.40" height="1.40" fill="#0000c0"/><rect x="181.45" y="70.35" width="8.90" height="1.40" fill="#fff"/><rect x="190.20" y="70.35" width="1.40" height="1.40" fill="#0000c0"/><rect x="180.20" y="71.60" width="1.40" height="1.40" fill="#0000c0"/><rect x="181.45" y="71.60" width="1.40" height="1.40" fill="#fff"/><rect x="182.70" y="71.60" width="6.40" height="1.40" fill="#1c1c1c"/><rect x="188.95" y="71.60" width="1.40" height="1.40" fill="#fff"/><rect x="190.20" y="71.60" width="1.40" height="1.40" fill="#0000c0"/><rect x="180.20" y="72.85" width="1.40" height="1.40" fill="#0000c0"/><rect x="181.45" y="72.85" width="8.90" height="1.40" fill="#fff"/><rect x="190.20" y="72.85" width="1.40" height="1.40" fill="#0000c0"/><rect x="180.20" y="74.10" width="1.40" height="1.40" fill="#0000c0"/><rect x="181.45" y="74.10" width="8.90" height="1.40" fill="#fff"/><rect x="190.20" y="74.10" width="1.40" height="1.40" fill="#0000c0"/><rect x="180.20" y="75.35" width="11.40" height="1.40" fill="#0000c0"/><path d="M202 62.2H206.4V60.8Q210.2 59.6 214 60.8V62.2H218.6Q219.4 62.2 219.4 63V76.4H202Q201.3 76.4 201.3 75.6V63Q201.3 62.2 202 62.2Z" fill="#a6a6a6"/><rect x="206" y="64" width="8.4" height="1.3" fill="#f0f0f0"/><path d="M210.2 69.4H217.2L219.9 72V77.6H210.2Z" fill="#f6f6f6" stroke="#c8c8c8" stroke-width="0.6"/><path d="M212 72.4H216M212 74.8H218.2" stroke="#b0b0b0" stroke-width="1.1"/><path d="M203 77.9H220.8V70" stroke="#fff" stroke-width="1.2" fill="none" opacity="0.9"/><rect x="243.70" y="60.20" width="11.40" height="1.40" fill="#1c1c1c"/><rect x="242.45" y="61.45" width="1.40" height="1.40" fill="#1c1c1c"/><rect x="243.70" y="61.45" width="10.15" height="1.40" fill="#fff"/><rect x="253.70" y="61.45" width="1.40" height="1.40" fill="#1c1c1c"/><rect x="241.20" y="62.70" width="1.40" height="1.40" fill="#1c1c1c"/><rect x="242.45" y="62.70" width="1.40" height="1.40" fill="#fff"/><rect x="243.70" y="62.70" width="7.65" height="1.40" fill="#1c1c1c"/><rect x="251.20" y="62.70" width="1.40" height="1.40" fill="#fff"/><rect x="252.45" y="62.70" width="1.40" height="1.40" fill="#1c1c1c"/><rect x="239.95" y="63.95" width="1.40" height="1.40" fill="#1c1c1c"/><rect x="241.20" y="63.95" width="10.15" height="1.40" fill="#fff"/><rect x="251.20" y="63.95" width="1.40" height="1.40" fill="#1c1c1c"/><rect x="253.70" y="63.95" width="1.40" height="1.40" fill="#1c1c1c"/><rect x="238.70" y="65.20" width="1.40" height="1.40" fill="#1c1c1c"/><rect x="239.95" y="65.20" width="1.40" height="1.40" fill="#fff"/><rect x="241.20" y="65.20" width="7.65" height="1.40" fill="#1c1c1c"/><rect x="248.70" y="65.20" width="1.40" height="1.40" fill="#fff"/><rect x="249.95" y="65.20" width="1.40" height="1.40" fill="#1c1c1c"/><rect x="252.45" y="65.20" width="1.40" height="1.40" fill="#1c1c1c"/><rect x="253.70" y="65.20" width="1.40" height="1.40" fill="#fff"/><rect x="254.95" y="65.20" width="1.40" height="1.40" fill="#1c1c1c"/><rect x="237.45" y="66.45" width="15.15" height="1.40" fill="#1c1c1c"/><rect x="252.45" y="66.45" width="1.40" height="1.40" fill="#fff"/><rect x="253.70" y="66.45" width="2.65" height="1.40" fill="#1c1c1c"/><rect x="236.20" y="67.70" width="15.15" height="1.40" fill="#1c1c1c"/><rect x="251.20" y="67.70" width="1.40" height="1.40" fill="#fff"/><rect x="252.45" y="67.70" width="1.40" height="1.40" fill="#1c1c1c"/><rect x="253.70" y="67.70" width="1.40" height="1.40" fill="#fff"/><rect x="254.95" y="67.70" width="1.40" height="1.40" fill="#1c1c1c"/><rect x="236.20" y="68.95" width="1.40" height="1.40" fill="#1c1c1c"/><rect x="237.45" y="68.95" width="12.65" height="1.40" fill="#fff"/><rect x="249.95" y="68.95" width="2.65" height="1.40" fill="#1c1c1c"/><rect x="252.45" y="68.95" width="1.40" height="1.40" fill="#fff"/><rect x="253.70" y="68.95" width="2.65" height="1.40" fill="#1c1c1c"/><rect x="236.20" y="70.20" width="1.40" height="1.40" fill="#1c1c1c"/><rect x="237.45" y="70.20" width="8.90" height="1.40" fill="#fff"/><rect x="246.20" y="70.20" width="2.65" height="1.40" fill="#f0e000"/><rect x="248.70" y="70.20" width="1.40" height="1.40" fill="#fff"/><rect x="249.95" y="70.20" width="1.40" height="1.40" fill="#1c1c1c"/><rect x="251.20" y="70.20" width="1.40" height="1.40" fill="#fff"/><rect x="252.45" y="70.20" width="1.40" height="1.40" fill="#1c1c1c"/><rect x="253.70" y="70.20" width="1.40" height="1.40" fill="#fff"/><rect x="254.95" y="70.20" width="1.40" height="1.40" fill="#1c1c1c"/><rect x="236.20" y="71.45" width="1.40" height="1.40" fill="#1c1c1c"/><rect x="237.45" y="71.45" width="12.65" height="1.40" fill="#fff"/><rect x="249.95" y="71.45" width="2.65" height="1.40" fill="#1c1c1c"/><rect x="252.45" y="71.45" width="1.40" height="1.40" fill="#fff"/><rect x="253.70" y="71.45" width="1.40" height="1.40" fill="#1c1c1c"/><rect x="236.20" y="72.70" width="15.15" height="1.40" fill="#1c1c1c"/><rect x="251.20" y="72.70" width="1.40" height="1.40" fill="#fff"/><rect x="252.45" y="72.70" width="1.40" height="1.40" fill="#1c1c1c"/><rect x="236.20" y="73.95" width="1.40" height="1.40" fill="#1c1c1c"/><rect x="237.45" y="73.95" width="12.65" height="1.40" fill="#a0a0a0"/><rect x="249.95" y="73.95" width="2.65" height="1.40" fill="#1c1c1c"/><rect x="236.20" y="75.20" width="1.40" height="1.40" fill="#1c1c1c"/><rect x="237.45" y="75.20" width="12.65" height="1.40" fill="#a0a0a0"/><rect x="249.95" y="75.20" width="1.40" height="1.40" fill="#1c1c1c"/><rect x="237.45" y="76.45" width="12.65" height="1.40" fill="#1c1c1c"/><path d="M275.5 61.6L281.3 65.2L287 61.5L286.6 66.8L291 69.4L286.4 71.3L288 77.6L282.7 74.2L279 77.9L278.4 72.6L272.6 72.4L277.6 68.6Z" fill="#ffee00" stroke="#1a1a1a" stroke-width="1.3" stroke-linejoin="miter"/><path d="M281 66.2L285.2 66.6L284 71.6L281.6 72.8L279.2 70.2Z" fill="#ff2010" stroke="#ff9000" stroke-width="0.8"/><g fill="none" stroke="#1a1a1a" stroke-width="1.25"><path d="M306.6 65.4A7.2 6.8 0 0 1 319.4 68.2"/><path d="M317.6 74.8A7.2 6.8 0 0 1 304.6 71.6" /><path d="M304.4 71.8Q303.6 68 305.8 66" stroke-dasharray="1.6 1.2"/><path d="M319.4 68Q320.4 71.8 318.2 74" stroke-dasharray="1.6 1.2"/></g><path d="M304.2 64.2H309.2V69.2Z" fill="#1a1a1a"/><path d="M320 76.6H314.6L320 71.4Z" fill="#1a1a1a"/><path d="M332.3 61.2V77H348.8" fill="none" stroke="#3a3a3a" stroke-width="1.5"/><path d="M332.8 65.6L334.6 65.8L340.2 75.2L345.2 65H348.4" fill="none" stroke="#1414ff" stroke-width="1.7"/><text x="366.6" y="76.9" font-size="18" fill="#1010ff" textLength="19.2" lengthAdjust="spacingAndGlyphs" font-family="Liberation Sans, sans-serif">123</text><g fill="none" stroke="#ff3018" stroke-width="1.3"><path d="M402.8 65.2Q412.6 57.8 422.6 65.2" /><path d="M406.4 68.2Q412.6 62.6 419 68.2"/></g><path d="M409.2 69.4L412.7 73.2L416.4 69.4M412.7 69.6V78" fill="none" stroke="#b89030" stroke-width="1.5"/><rect x="411.9" y="71.4" width="1.7" height="1.8" fill="#708018"/><text x="432.6" y="73.9" font-size="14" fill="#111" textLength="17.8" lengthAdjust="spacingAndGlyphs" font-family="Liberation Sans, sans-serif">FQ</text><path d="M470.2 77.6L472.6 73.4L473.6 69.6L475.6 66.6L477.2 69.4L478.6 73.4L480.4 75L483 76.6" fill="none" stroke="#1830a8" stroke-width="1.3"/><path d="M474 77.6L477.6 74.6L480.2 73.6L480.8 68.6L482.6 66.6L484.8 67.8L485.6 72.4L486.4 74.8H488" fill="none" stroke="#ff2010" stroke-width="1.3"/><rect x="493" y="57" width="27" height="26" fill="#f8f8f8"/><path d="M493 83V57.4H520" fill="none" stroke="#a0a0a0" stroke-width="1"/><path d="M493.5 83H520V57.8" fill="none" stroke="#fff" stroke-width="1"/><path d="M500.6 64.2V76Q500.6 77.4 502 77.4H513Q514.6 77.4 514.6 76V69.6Q514.6 68.2 513 68.2H504.4Z" fill="#fff" stroke="#1c1c1c" stroke-width="1.3" stroke-linejoin="round"/><path d="M503.4 71.6H512.2M503.4 74.2H512.2" stroke="#2a2a2a" stroke-width="1.2"/><text x="528.5" y="78.0" font-size="24.5" font-weight="bold" fill="#181818" stroke="#181818" stroke-width="0.8" textLength="13.2" lengthAdjust="spacingAndGlyphs" font-family="Liberation Sans, sans-serif">?</text><text x="527.7" y="77.3" font-size="24.5" font-weight="bold" fill="#ffe800" stroke="#181818" stroke-width="1.1" paint-order="stroke" textLength="13.2" lengthAdjust="spacingAndGlyphs" font-family="Liberation Sans, sans-serif">?</text><rect x="98" y="59" width="1" height="22.5" fill="#a0a0a0"/><rect x="99" y="59" width="1" height="22.5" fill="#fcfcfc"/><rect x="134" y="59" width="1" height="22.5" fill="#a0a0a0"/><rect x="135" y="59" width="1" height="22.5" fill="#fcfcfc"/><rect x="228" y="59" width="1" height="22.5" fill="#a0a0a0"/><rect x="229" y="59" width="1" height="22.5" fill="#fcfcfc"/><rect x="264" y="59" width="1" height="22.5" fill="#a0a0a0"/><rect x="265" y="59" width="1" height="22.5" fill="#fcfcfc"/><rect x="358" y="59" width="1" height="22.5" fill="#a0a0a0"/><rect x="359" y="59" width="1" height="22.5" fill="#fcfcfc"/><rect x="394" y="59" width="1" height="22.5" fill="#a0a0a0"/><rect x="395" y="59" width="1" height="22.5" fill="#fcfcfc"/><rect x="459" y="59" width="1" height="22.5" fill="#a0a0a0"/><rect x="460" y="59" width="1" height="22.5" fill="#fcfcfc"/><rect x="607.4" y="56.5" width="1.5" height="27" fill="#b0b0b0"/><rect x="609" y="56.5" width="1" height="27" fill="#fcfcfc"/><rect x="3.2" y="56.5" width="1.8" height="27" fill="#fcfcfc"/><rect x="5.1" y="56.5" width="1" height="27" fill="#a8a8a8"/><rect x="3" y="83" width="2.4" height="1" fill="#a8a8a8"/></svg>
<div class="a" style="left:0;top:1042px;width:1920px;height:38px;background:linear-gradient(90deg,#233a45 0px,#223843 850px,#20323f 1130px,#1d2c43 1340px,#1c2a45 1600px,#1c2946 1920px)"></div>
<svg width="1920" height="38" viewBox="0 1042 1920 38" style="position:absolute;left:0;top:1042px">
<defs><linearGradient id="edg" x1="0.2" y1="0" x2="0.6" y2="1"><stop offset="0" stop-color="#37bff0"/><stop offset="0.5" stop-color="#1e8fdc"/><stop offset="1" stop-color="#0d53a8"/></linearGradient><linearGradient id="edg2" x1="0.1" y1="0.1" x2="1" y2="0.5"><stop offset="0" stop-color="#27a6ea"/><stop offset="0.5" stop-color="#32c2c4"/><stop offset="1" stop-color="#5cdc62"/></linearGradient><linearGradient id="bag" x1="0" y1="0" x2="0" y2="1"><stop offset="0" stop-color="#ffffff"/><stop offset="1" stop-color="#e4e6ea"/></linearGradient><linearGradient id="np" x1="0" y1="0.6" x2="1" y2="0.75"><stop offset="0" stop-color="#4f9fd6"/><stop offset="0.45" stop-color="#a9cfe9"/><stop offset="1" stop-color="#e6eef0"/></linearGradient></defs>
<rect x="616" y="1042" width="200" height="34.5" fill="#4c616b"/>
<rect x="616" y="1076.5" width="200" height="3.5" fill="#76b9ed"/>
<rect x="281.8" y="1076.5" width="190.5" height="3.5" fill="#76b9ed"/>
<path d="M11.6 1053.8L20.2 1052.6V1060.2H11.6ZM21.2 1052.4L32.2 1050.9V1060.2H21.2ZM11.6 1061.3H20.2V1069.2L11.6 1068ZM21.2 1061.3H32.2V1071L21.2 1069.4Z" fill="#fff"/>
<circle cx="69" cy="1059.1" r="7.1" fill="none" stroke="#fff" stroke-width="1.8"/><path d="M63.9 1064.2L57.6 1070.5" stroke="#fff" stroke-width="2" />
<g fill="none" stroke="#fff" stroke-width="1.35"><rect x="102.6" y="1056.7" width="11.9" height="8.4"/><path d="M102.6 1051V1054.1H114.5V1051M102.6 1070V1067.6H114.5V1070M120.6 1051V1070"/></g><rect x="119.2" y="1057.2" width="2.8" height="2.8" fill="#fff"/>
<path d="M152 1054.2Q152 1052.9 153.3 1052.9H158.7L160.3 1054.7H169.4Q170.4 1054.7 170.4 1055.7V1068.3H152Z" fill="#ffd868"/>
<path d="M152 1054.2Q152 1052.9 153.3 1052.9H158.7L160.3 1054.7H152Z" fill="#e6a800"/>
<path d="M155 1069.3V1062.4Q155 1061 156.4 1061H166Q167.4 1061 167.4 1062.4V1069.3H164.5V1064.2H157.9V1069.3Z" fill="#2a96ee"/>
<rect x="197.2" y="1051" width="19.6" height="19.5" rx="1.3" fill="#2a40d8"/>
<rect x="202.8" y="1051.2" width="9.2" height="6.6" fill="#c4c8d0"/><rect x="208.2" y="1052" width="2.7" height="4.9" fill="#2030b8"/>
<rect x="199.6" y="1060" width="14.7" height="10" fill="#fdfdfd"/>
<path d="M200.4 1062H213.6M200.4 1066.8H213.6" stroke="#f2b89a" stroke-width="0.6"/><path d="M200 1064.4H213.8" stroke="#e02030" stroke-width="1"/><path d="M199.6 1069.7H214.3" stroke="#d83040" stroke-width="1"/>
<path d="M208.6 1065.4H211.6V1068H209.8Z" fill="#9098a0"/>
<path d="M247.4 1054.4V1053.2Q247.4 1051.9 248.7 1051.9H256.7Q258 1051.9 258 1053.2V1054.4" fill="none" stroke="#3aa0ea" stroke-width="1.1"/>
<rect x="243.3" y="1054" width="18.8" height="16.7" rx="2.6" fill="url(#bag)"/>
<rect x="248" y="1057.9" width="3.9" height="3.9" fill="#f25022"/><rect x="253.1" y="1057.9" width="3.9" height="3.9" fill="#6da010"/><rect x="248" y="1063" width="3.9" height="3.9" fill="#10a8e8"/><rect x="253.1" y="1063" width="3.9" height="3.9" fill="#ffb400"/>
<rect x="290.0" y="1054.0" width="14.2" height="14.2" fill="#e8392a" transform="rotate(45 297.1 1061.1)"/>
<rect x="289.70000000000005" y="1053.6999999999998" width="14.8" height="14.8" rx="3.4" fill="#e7a32e"/>
<rect x="290.6" y="1054.6" width="13" height="13" rx="3" fill="#e7a32e" transform="rotate(45 297.1 1061.1)"/>
<circle cx="297.1" cy="1061.1" r="7" fill="#ebb640"/>
<ellipse cx="297.1" cy="1061.1" rx="6.1" ry="3.8" fill="#f6f6f0" transform="rotate(-8 297.1 1061.1)"/>
<circle cx="297.3" cy="1061.0" r="3" fill="#4a4848"/><circle cx="296.40000000000003" cy="1060.1" r="1" fill="#fff"/>
<path d="M291.5 1063.1Q295.1 1066.3 299.70000000000005 1065.3" stroke="#58a83c" stroke-width="1.3" fill="none"/><path d="M298.5 1056.6999999999998Q302.1 1057.6999999999998 303.1 1060.3" stroke="#58a83c" stroke-width="1.3" fill="none"/>
<path d="M496.6 1052L508.2 1053.8L504.6 1069.8L490.2 1066.2Z" fill="url(#np)"/>
<path d="M496.6 1052L508.2 1053.8L507.4 1056.4L495.2 1054.6Z" fill="#c9d6de"/>
<path d="M508.2 1053.8L504.6 1069.8L505.6 1069.4L509 1055Z" fill="#b08a34"/>
<path d="M494.4 1059.4L504.2 1056.6M493 1062.6L502 1060" stroke="#5a8fd0" stroke-width="0.8" fill="none" opacity="0.8"/>
<path d="M490.2 1066.2L493.4 1058.6L495.4 1063.4Z" fill="#2a7fc4" opacity="0.75"/>
<circle cx="546.1" cy="1061.0" r="10" fill="url(#edg2)"/>
<path d="M537.90 1055.30Q542.10 1054.40 545.50 1057.60Q542.70 1060.00 543.50 1064.00Q544.70 1069.40 551.10 1069.60A10 10 0 0 1 537.90 1055.30Z" fill="#2f8ede"/>
<path d="M541.70 1059.20Q540.50 1063.60 542.90 1067.00Q546.50 1071.40 552.70 1068.50A10 10 0 0 0 555.30 1064.90Q550.10 1067.40 546.70 1065.20Q543.70 1063.00 545.70 1059.40Q543.50 1057.60 541.70 1059.20Z" fill="#0f50ac"/>
<path d="M545.20 1059.80Q547.10 1058.40 548.30 1060.40Q548.70 1062.20 547.70 1063.40Q550.50 1065.40 555.00 1065.20L554.70 1066.10Q550.10 1067.60 546.70 1065.20Q543.90 1062.60 545.20 1059.80Z" fill="#223741"/>
<path d="M583.53 1056.05A9.9 9.9 0 0 1 600.67 1056.05L592.10 1056.05A4.95 4.95 0 0 0 587.81 1063.47Z" fill="#ea4335"/>
<path d="M600.67 1056.05A9.9 9.9 0 0 1 592.10 1070.90L596.39 1063.47A4.95 4.95 0 0 0 592.10 1056.05Z" fill="#fbbc05"/>
<path d="M592.10 1070.90A9.9 9.9 0 0 1 583.53 1056.05L587.81 1063.47A4.95 4.95 0 0 0 596.39 1063.47Z" fill="#34a853"/>
<circle cx="592.1" cy="1061.0" r="4.7" fill="#fff"/><circle cx="592.1" cy="1061.0" r="3.75" fill="#4285f4"/>
<rect x="626" y="1051" width="20" height="20" fill="#fff"/>
<path d="M626.8 1051.2L630.7 1054.8L634.6 1051.2M630.7 1051.2V1061.4H633.6" fill="none" stroke="#111" stroke-width="1.2"/>
<rect x="633.4" y="1057.4" width="12.6" height="9.7" fill="#00ee00"/>
<rect x="637.4" y="1059.8" width="1.2" height="6.2" fill="#061806"/><rect x="639.9" y="1064.6" width="1.2" height="1.5" fill="#061806"/><rect x="642.3" y="1058.8" width="2.7" height="7.3" fill="#061806"/>
<text x="310.50" y="1067.00" font-size="14.7" fill="#fff" textLength="155.10" lengthAdjust="spacingAndGlyphs" font-family="Liberation Sans, sans-serif" xml:space="preserve">FastStone Image View...</text>
<text x="649.90" y="1067.00" font-size="14.7" fill="#fff" textLength="118.70" lengthAdjust="spacingAndGlyphs" font-family="Liberation Sans, sans-serif" xml:space="preserve">26855 - AntScope</text>
<text x="1767.50" y="1066.70" font-size="14.7" fill="#fff" textLength="25.60" lengthAdjust="spacingAndGlyphs" font-family="Liberation Sans, sans-serif" xml:space="preserve">CES</text>
<text x="1810.80" y="1066.70" font-size="14.7" fill="#fff" textLength="35.00" lengthAdjust="spacingAndGlyphs" font-family="Liberation Sans, sans-serif" xml:space="preserve">13:23</text>
<path d="M1585.6 1064.6L1593.2 1057L1600.8 1064.6" fill="none" stroke="#fff" stroke-width="1.2"/>
<path d="M1622.6 1051.3Q1626.6 1053.9 1631.8 1054.1V1060.1Q1631.8 1067.1 1622.6 1070.5Q1613.4 1067.1 1613.4 1060.1V1054.1Q1618.6 1053.9 1622.6 1051.3Z" fill="#fff"/>
<path d="M1622.6 1051.5V1070.3M1613.4 1060.7H1631.8" stroke="#141414" stroke-width="1.1"/>
<circle cx="1628" cy="1066" r="5" fill="#1fa64a"/><path d="M1625.3 1066L1627.2 1067.9L1630.7 1064.2" fill="none" stroke="#fff" stroke-width="1.3"/>
<g fill="none" stroke="#fff" stroke-width="1.15"><rect x="1647.6" y="1056.2" width="8.8" height="9.1" rx="1.7"/><path d="M1656.6 1060L1660.8 1057.2V1064.4L1656.6 1061.6"/><path d="M1648.2 1054Q1653.2 1051 1658.4 1054M1648.2 1067.8Q1653.2 1070.8 1658.4 1067.8"/></g>
<rect x="1677.9" y="1056.1" width="13.9" height="10.6" fill="none" stroke="#fff" stroke-width="1.1"/><rect x="1679.4" y="1058" width="11" height="6.9" fill="#fff"/><rect x="1692.2" y="1059.4" width="1.1" height="3.8" fill="#fff"/>
<rect x="1672.6" y="1055.4" width="5.8" height="12" fill="#1c2a45"/>
<path d="M1674.2 1053.8V1056.4M1676.9 1053.8V1056.4" stroke="#fff" stroke-width="1.1"/><path d="M1673.3 1056.4V1059.2Q1673.3 1061.4 1675.55 1061.4Q1677.8 1061.4 1677.8 1059.2V1056.4Z" fill="none" stroke="#fff" stroke-width="1.1"/><path d="M1675.55 1061.4V1067.2" fill="none" stroke="#fff" stroke-width="1.2"/>
<g fill="none" stroke="#fff" stroke-width="1.2"><path d="M1715.3999999999999 1068.6A5.2 5.2 0 0 1 1720.6 1063.3999999999999"/><path d="M1710.8 1068.6A9.8 9.8 0 0 1 1720.6 1058.8"/><path d="M1706.1999999999998 1068.6A14.4 14.4 0 0 1 1720.6 1054.1999999999998" stroke="#c8ccd4"/></g><circle cx="1719.3" cy="1067.3" r="1.5" fill="#fff"/>
<path d="M1733.2 1058.3H1736.3L1740.4 1054.3V1068.1L1736.3 1064.1H1733.2Z" fill="none" stroke="#fff" stroke-width="1.2" stroke-linejoin="round"/>
<g fill="none" stroke-width="1.15"><path d="M1743.8 1058.6Q1746 1061.2 1743.8 1063.8" stroke="#fff"/><path d="M1746.6 1056Q1750.6 1061.2 1746.6 1066.4" stroke="#d0d4dc"/><path d="M1749.6 1053.2Q1755.4 1061.2 1749.6 1069.2" stroke="#6e7888"/></g>
<path d="M1869.6 1051.6H1888.6V1068H1882.2L1879.2 1071L1876.2 1068H1869.6Z" fill="none" stroke="#fff" stroke-width="1.25"/>
<rect x="1914" y="1042" width="1" height="38" fill="#8a97ab"/>
</svg>
</body></html>
